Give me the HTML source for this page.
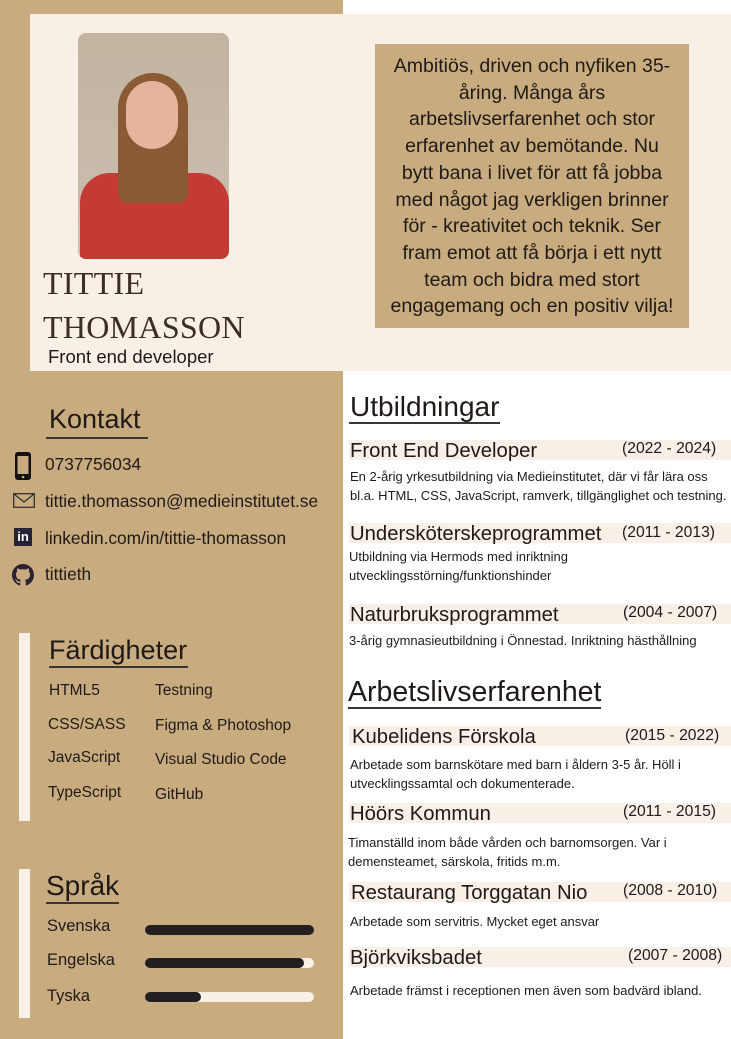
<!DOCTYPE html>
<html><head><meta charset="utf-8"><style>
*{margin:0;padding:0;box-sizing:border-box}
body{width:731px;height:1039px;position:relative;overflow:hidden;background:#fff;font-family:"Liberation Sans",sans-serif;color:#1f1a17}
.a{position:absolute;white-space:nowrap}
.tan{background:#c8ab7f}
.cream{background:#f8efe6}
.h{font-size:27px;line-height:30px}
.ul{position:absolute;height:1.5px;background:#3a3530}
.bar{position:absolute;left:349px;width:382px;height:20px;background:#f8efe6}
.et{font-size:20.3px;line-height:20px}
.dt{font-size:15.7px;line-height:20px}
.bd{font-size:13px;line-height:19px}
.sk{font-size:15.5px}
.lb{position:absolute;left:145px;width:169px;height:10px;border-radius:5px;background:#f8efe6}
.lb i{display:block;height:10px;border-radius:5px;background:#231f20}
</style></head><body>
<div class="a tan" style="left:0;top:0;width:343px;height:1039px"></div>
<div class="a cream" style="left:30px;top:14px;width:701px;height:357px"></div>

<div class="a" style="left:78px;top:33px;width:151px;height:226px;border-radius:8px;overflow:hidden;background:linear-gradient(#c3b4a0,#cbbfb0)">
  <div class="a" style="left:2px;top:140px;width:149px;height:90px;background:#c43a35;border-radius:30px 30px 0 0"></div>
  <div class="a" style="left:40px;top:40px;width:70px;height:130px;background:#8a5a35;border-radius:35px 35px 10px 10px"></div>
  <div class="a" style="left:48px;top:48px;width:52px;height:68px;background:#e4b49c;border-radius:26px"></div>
</div>

<div class="a" style="left:43px;top:265px;font-family:'Liberation Serif',serif;font-size:32px;line-height:36px;color:#3a2e27;letter-spacing:0.3px">TITTIE</div>
<div class="a" style="left:43px;top:309px;font-family:'Liberation Serif',serif;font-size:32px;line-height:36px;color:#3a2e27;letter-spacing:0.3px">THOMASSON</div>
<div class="a" style="left:48px;top:346px;font-size:18.5px;line-height:22px">Front end developer</div>

<div class="a tan" style="left:375px;top:44px;width:314px;height:284px"></div>
<div class="a" style="left:375px;top:53px;width:314px;text-align:center;font-size:19.5px;line-height:26.7px">Ambitiös, driven och nyfiken 35-<br>åring. Många års<br>arbetslivserfarenhet och stor<br>erfarenhet av bemötande. Nu<br>bytt bana i livet för att få jobba<br>med något jag verkligen brinner<br>för - kreativitet och teknik. Ser<br>fram emot att få börja i ett nytt<br>team och bidra med stort<br>engagemang och en positiv vilja!</div>

<div class="a h" style="left:49px;top:404px">Kontakt</div>
<div class="ul" style="left:46px;top:437px;width:102px"></div>
<svg class="a" style="left:14px;top:451px" width="18" height="30" viewBox="0 0 18 30"><rect x="1" y="1" width="16" height="28" rx="3" fill="#111"/><rect x="3.5" y="5" width="11" height="18" fill="#c8ab7f"/><circle cx="9" cy="26" r="1.3" fill="#c8ab7f"/></svg>
<div class="a" style="left:45px;top:454px;font-size:17.3px;line-height:20px">0737756034</div>
<svg class="a" style="left:13px;top:493px" width="22" height="15" viewBox="0 0 22 15"><rect x="0.7" y="0.7" width="20.6" height="13.6" fill="none" stroke="#333" stroke-width="1.3"/><path d="M1 1l10 8 10-8" fill="none" stroke="#333" stroke-width="1.3"/></svg>
<div class="a" style="left:45px;top:491px;font-size:17.3px;line-height:20px">tittie.thomasson@medieinstitutet.se</div>
<div class="a" style="left:14px;top:528px;width:18px;height:18px;background:#272235;color:#fff;font-weight:bold;font-size:13px;line-height:18px;text-align:center">in</div>
<div class="a" style="left:45px;top:528px;font-size:17.3px;line-height:20px">linkedin.com/in/tittie-thomasson</div>
<svg class="a" style="left:12px;top:564px" width="22" height="22" viewBox="0 0 16 16"><path fill="#272235" d="M8 0C3.58 0 0 3.58 0 8c0 3.54 2.29 6.53 5.47 7.59.4.07.55-.17.55-.38 0-.19-.01-.82-.01-1.49-2.01.37-2.53-.49-2.69-.94-.09-.23-.48-.94-.82-1.13-.28-.15-.68-.52-.01-.53.63-.01 1.08.58 1.23.82.72 1.21 1.87.87 2.33.66.07-.52.28-.87.51-1.07-1.78-.2-3.64-.89-3.64-3.95 0-.87.31-1.59.82-2.15-.08-.2-.36-1.02.08-2.12 0 0 .67-.21 2.2.82.64-.18 1.32-.27 2-.27.68 0 1.36.09 2 .27 1.53-1.04 2.2-.82 2.2-.82.44 1.1.16 1.92.08 2.12.51.56.82 1.27.82 2.15 0 3.07-1.87 3.75-3.65 3.95.29.25.54.73.54 1.48 0 1.07-.01 1.93-.01 2.2 0 .21.15.46.55.38A8.01 8.01 0 0 0 16 8c0-4.42-3.58-8-8-8z"/></svg>
<div class="a" style="left:45px;top:564px;font-size:17.3px;line-height:20px">tittieth</div>

<div class="a cream" style="left:19px;top:633px;width:11px;height:188px"></div>
<div class="a h" style="left:49px;top:635px">Färdigheter</div>
<div class="ul" style="left:49px;top:666px;width:139px"></div>
<div class="a sk" style="left:49px;top:682px">HTML5</div>
<div class="a sk" style="left:48px;top:716px">CSS/SASS</div>
<div class="a sk" style="left:48px;top:749px">JavaScript</div>
<div class="a sk" style="left:48px;top:784px">TypeScript</div>
<div class="a sk" style="left:155px;top:682px">Testning</div>
<div class="a sk" style="left:155px;top:717px">Figma &amp; Photoshop</div>
<div class="a sk" style="left:155px;top:751px">Visual Studio Code</div>
<div class="a sk" style="left:155px;top:786px">GitHub</div>

<div class="a cream" style="left:19px;top:869px;width:11px;height:149px"></div>
<div class="a h" style="left:46px;top:871px;font-size:28px">Språk</div>
<div class="ul" style="left:46px;top:902px;width:73px"></div>
<div class="a" style="left:47px;top:917px;font-size:16.5px">Svenska</div>
<div class="a" style="left:47px;top:951px;font-size:16.5px">Engelska</div>
<div class="a" style="left:47px;top:987px;font-size:16.5px">Tyska</div>
<div class="lb" style="top:925px"><i style="width:100%"></i></div>
<div class="lb" style="top:958px"><i style="width:94%"></i></div>
<div class="lb" style="top:992px"><i style="width:33%"></i></div>

<div class="a h" style="left:350px;top:392px;font-size:28px">Utbildningar</div>
<div class="ul" style="left:349px;top:422px;width:151px"></div>
<div class="bar" style="top:440px"></div>
<div class="a et" style="left:350px;top:441px">Front End Developer</div>
<div class="a dt" style="left:622px;top:439px">(2022 - 2024)</div>
<div class="a bd" style="left:350px;top:467px">En 2-årig yrkesutbildning via Medieinstitutet, där vi får lära oss<br>bl.a. HTML, CSS, JavaScript, ramverk, tillgänglighet och testning.</div>
<div class="bar" style="top:523px"></div>
<div class="a et" style="left:350px;top:524px">Undersköterskeprogrammet</div>
<div class="a dt" style="left:622px;top:523px">(2011 - 2013)</div>
<div class="a bd" style="left:349px;top:547px">Utbildning via Hermods med inriktning<br>utvecklingsstörning/funktionshinder</div>
<div class="bar" style="top:604px"></div>
<div class="a et" style="left:350px;top:605px">Naturbruksprogrammet</div>
<div class="a dt" style="left:623px;top:603px">(2004 - 2007)</div>
<div class="a bd" style="left:349px;top:631px">3-årig gymnasieutbildning i Önnestad. Inriktning hästhållning</div>

<div class="a h" style="left:348px;top:677px;font-size:28.5px">Arbetslivserfarenhet</div>
<div class="ul" style="left:348px;top:707px;width:253px"></div>
<div class="bar" style="top:726px"></div>
<div class="a et" style="left:352px;top:727px">Kubelidens Förskola</div>
<div class="a dt" style="left:625px;top:726px">(2015 - 2022)</div>
<div class="a bd" style="left:350px;top:755px">Arbetade som barnskötare med barn i åldern 3-5 år. Höll i<br>utvecklingssamtal och dokumenterade.</div>
<div class="bar" style="top:803px"></div>
<div class="a et" style="left:350px;top:804px">Höörs Kommun</div>
<div class="a dt" style="left:623px;top:802px">(2011 - 2015)</div>
<div class="a bd" style="left:348px;top:833px">Timanställd inom både vården och barnomsorgen. Var i<br>demensteamet, särskola, fritids m.m.</div>
<div class="bar" style="top:882px"></div>
<div class="a et" style="left:351px;top:883px">Restaurang Torggatan Nio</div>
<div class="a dt" style="left:623px;top:881px">(2008 - 2010)</div>
<div class="a bd" style="left:350px;top:912px">Arbetade som servitris. Mycket eget ansvar</div>
<div class="bar" style="top:947px"></div>
<div class="a et" style="left:350px;top:948px">Björkviksbadet</div>
<div class="a dt" style="left:628px;top:946px">(2007 - 2008)</div>
<div class="a bd" style="left:350px;top:981px">Arbetade främst i receptionen men även som badvärd ibland.</div>
</body></html>
